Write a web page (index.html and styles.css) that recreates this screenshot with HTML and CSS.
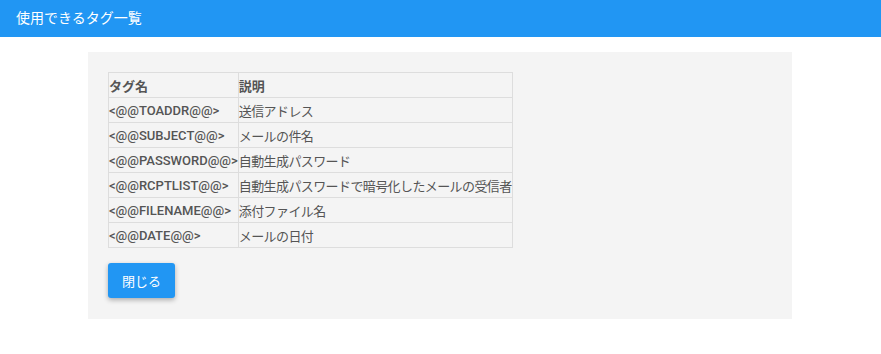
FILE: index.html
```html
<!DOCTYPE html>
<html lang="ja">
<head>
    <meta charset="UTF-8">
    <meta name="viewport" content="width=device-width, initial-scale=1.0">
    <title>使用できるタグ一覧</title>
    <link rel="stylesheet" href="styles.css">
</head>
<body>

    <div class="header">使用できるタグ一覧</div>

    <div class="panel">
        <table class="tags">
            <tr>
                <th>タグ名</th>
                <th>説明</th>
            </tr>
            <tr>
                <td class="tag">&lt;@@TOADDR@@&gt;</td>
                <td class="desc">送信アドレス</td>
            </tr>
            <tr>
                <td class="tag">&lt;@@SUBJECT@@&gt;</td>
                <td class="desc">メールの件名</td>
            </tr>
            <tr>
                <td class="tag">&lt;@@PASSWORD@@&gt;</td>
                <td class="desc">自動生成パスワード</td>
            </tr>
            <tr>
                <td class="tag">&lt;@@RCPTLIST@@&gt;</td>
                <td class="desc">自動生成パスワードで暗号化したメールの受信者</td>
            </tr>
            <tr>
                <td class="tag">&lt;@@FILENAME@@&gt;</td>
                <td class="desc">添付ファイル名</td>
            </tr>
            <tr>
                <td class="tag">&lt;@@DATE@@&gt;</td>
                <td class="desc">メールの日付</td>
            </tr>
        </table>
        <button class="closeButton">閉じる</button>
    </div>

</body>
</html>
```

FILE: styles.css
```css
body {
    font-family: Roboto, "Noto Sans CJK JP", sans-serif;
    margin: 0;
    background: #fff;
    color: #555;
}
.header {
    background: #2196F3;
    color: #fff;
    height: 37px;
    line-height: 37px;
    padding: 0 16px;
    font-size: 14px;
}
.panel {
    box-sizing: border-box;
    width: 704px;
    margin: 15px 0 0 88px;
    padding: 20px 20px 21px;
    background: #f4f4f4;
}
.tags {
    border-collapse: collapse;
    font-size: 13px;
}
.tags th, .tags td {
    border: 1px solid #ddd;
    padding: 0;
    height: 24px;
    text-align: left;
    white-space: nowrap;
}
.tags th {
    font-weight: bold;
}
.tag {
    font-weight: 500;
}
.desc {
    letter-spacing: -0.6px;
}
.closeButton {
    margin-top: 15px;
    padding: 0 14px;
    height: 35px;
    background-color: #2196F3;
    color: white;
    border: none;
    border-radius: 3px;
    font-family: inherit;
    font-size: 13px;
    box-shadow: 0 2px 5px rgba(0, 0, 0, 0.3);
    cursor: pointer;
    display: block;
}
```
